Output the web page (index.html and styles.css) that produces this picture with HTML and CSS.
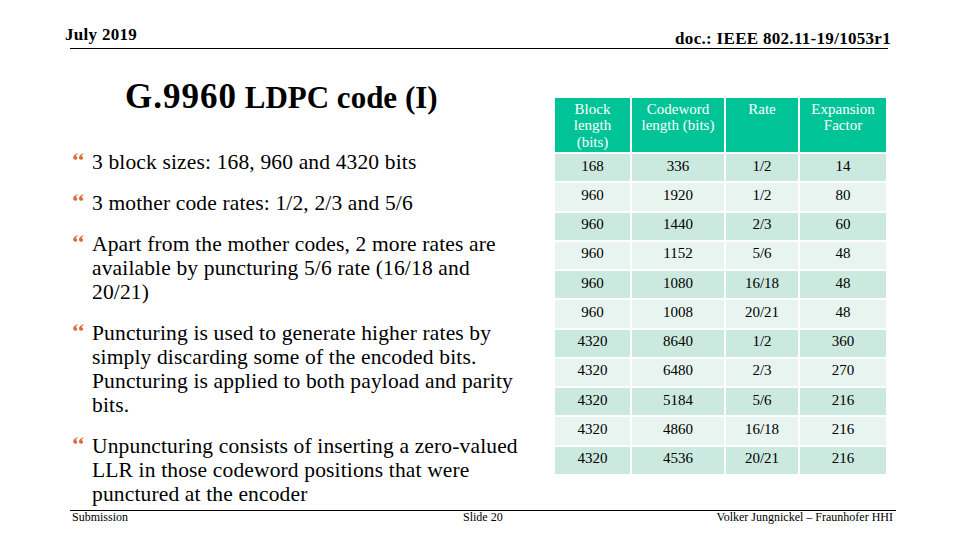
FILE: index.html
```html
<!DOCTYPE html>
<html lang="en">
<head>
<meta charset="utf-8">
<title>G.9960 LDPC code (I)</title>
<link rel="stylesheet" href="styles.css">
</head>
<body>
<div class="slide">
  <header class="top">
    <div class="top-row">
      <span class="date">July 2019</span>
      <span class="doc">doc.: IEEE 802.11-19/1053r1</span>
    </div>
    <div class="rule"></div>
  </header>
  <main class="content">
    <section class="left">
      <h1 class="title"><span class="big">G.9960</span> LDPC code (I)</h1>
      <ul class="bullets">
        <li><span class="mark"><svg viewBox="0 0 11 7" width="11" height="7"><path d="M4.6 0.3C2.2 0.9 0.2 2.6 0.2 4.6C0.2 6 1.1 6.8 2.3 6.8C3.5 6.8 4.3 6 4.3 4.9C4.3 3.9 3.6 3.3 2.7 3.2C3 2.1 3.9 1.3 4.9 0.9Z"/><path d="M10.4 0.3C8 0.9 6 2.6 6 4.6C6 6 6.9 6.8 8.1 6.8C9.3 6.8 10.1 6 10.1 4.9C10.1 3.9 9.4 3.3 8.5 3.2C8.8 2.1 9.7 1.3 10.7 0.9Z"/></svg></span><span class="txt">3 block sizes: 168, 960 and 4320 bits</span></li>
        <li><span class="mark"><svg viewBox="0 0 11 7" width="11" height="7"><path d="M4.6 0.3C2.2 0.9 0.2 2.6 0.2 4.6C0.2 6 1.1 6.8 2.3 6.8C3.5 6.8 4.3 6 4.3 4.9C4.3 3.9 3.6 3.3 2.7 3.2C3 2.1 3.9 1.3 4.9 0.9Z"/><path d="M10.4 0.3C8 0.9 6 2.6 6 4.6C6 6 6.9 6.8 8.1 6.8C9.3 6.8 10.1 6 10.1 4.9C10.1 3.9 9.4 3.3 8.5 3.2C8.8 2.1 9.7 1.3 10.7 0.9Z"/></svg></span><span class="txt">3 mother code rates: 1/2, 2/3 and 5/6</span></li>
        <li><span class="mark"><svg viewBox="0 0 11 7" width="11" height="7"><path d="M4.6 0.3C2.2 0.9 0.2 2.6 0.2 4.6C0.2 6 1.1 6.8 2.3 6.8C3.5 6.8 4.3 6 4.3 4.9C4.3 3.9 3.6 3.3 2.7 3.2C3 2.1 3.9 1.3 4.9 0.9Z"/><path d="M10.4 0.3C8 0.9 6 2.6 6 4.6C6 6 6.9 6.8 8.1 6.8C9.3 6.8 10.1 6 10.1 4.9C10.1 3.9 9.4 3.3 8.5 3.2C8.8 2.1 9.7 1.3 10.7 0.9Z"/></svg></span><span class="txt">Apart from the mother codes, 2 more rates are<br>available by puncturing 5/6 rate (16/18 and<br>20/21)</span></li>
        <li><span class="mark"><svg viewBox="0 0 11 7" width="11" height="7"><path d="M4.6 0.3C2.2 0.9 0.2 2.6 0.2 4.6C0.2 6 1.1 6.8 2.3 6.8C3.5 6.8 4.3 6 4.3 4.9C4.3 3.9 3.6 3.3 2.7 3.2C3 2.1 3.9 1.3 4.9 0.9Z"/><path d="M10.4 0.3C8 0.9 6 2.6 6 4.6C6 6 6.9 6.8 8.1 6.8C9.3 6.8 10.1 6 10.1 4.9C10.1 3.9 9.4 3.3 8.5 3.2C8.8 2.1 9.7 1.3 10.7 0.9Z"/></svg></span><span class="txt">Puncturing is used to generate higher rates by<br>simply discarding some of the encoded bits.<br>Puncturing is applied to both payload and parity<br>bits.</span></li>
        <li><span class="mark"><svg viewBox="0 0 11 7" width="11" height="7"><path d="M4.6 0.3C2.2 0.9 0.2 2.6 0.2 4.6C0.2 6 1.1 6.8 2.3 6.8C3.5 6.8 4.3 6 4.3 4.9C4.3 3.9 3.6 3.3 2.7 3.2C3 2.1 3.9 1.3 4.9 0.9Z"/><path d="M10.4 0.3C8 0.9 6 2.6 6 4.6C6 6 6.9 6.8 8.1 6.8C9.3 6.8 10.1 6 10.1 4.9C10.1 3.9 9.4 3.3 8.5 3.2C8.8 2.1 9.7 1.3 10.7 0.9Z"/></svg></span><span class="txt">Unpuncturing consists of inserting a zero-valued<br>LLR in those codeword positions that were<br>punctured at the encoder</span></li>
      </ul>
    </section>
    <section class="right">
      <table class="codes">
        <colgroup>
          <col class="c1"><col class="c2"><col class="c3"><col class="c4">
        </colgroup>
        <thead>
          <tr class="hrow"><th>Block length (bits)</th><th>Codeword length (bits)</th><th>Rate</th><th>Expansion Factor</th></tr>
        </thead>
        <tbody>
          <tr class="dark"><td>168</td><td>336</td><td>1/2</td><td>14</td></tr>
          <tr class="light"><td>960</td><td>1920</td><td>1/2</td><td>80</td></tr>
          <tr class="dark"><td>960</td><td>1440</td><td>2/3</td><td>60</td></tr>
          <tr class="light"><td>960</td><td>1152</td><td>5/6</td><td>48</td></tr>
          <tr class="dark"><td>960</td><td>1080</td><td>16/18</td><td>48</td></tr>
          <tr class="light"><td>960</td><td>1008</td><td>20/21</td><td>48</td></tr>
          <tr class="dark"><td>4320</td><td>8640</td><td>1/2</td><td>360</td></tr>
          <tr class="light"><td>4320</td><td>6480</td><td>2/3</td><td>270</td></tr>
          <tr class="dark"><td>4320</td><td>5184</td><td>5/6</td><td>216</td></tr>
          <tr class="light"><td>4320</td><td>4860</td><td>16/18</td><td>216</td></tr>
          <tr class="dark"><td>4320</td><td>4536</td><td>20/21</td><td>216</td></tr>
        </tbody>
      </table>
    </section>
  </main>
  <footer class="foot">
    <span class="sub">Submission</span>
    <span class="pg">Slide 20</span>
    <span class="auth">Volker Jungnickel &#8211; Fraunhofer HHI</span>
  </footer>
</div>
</body>
</html>
```

FILE: styles.css
```css
* { box-sizing: border-box; }

html, body {
  margin: 0;
  padding: 0;
}

body {
  width: 960px;
  height: 540px;
  background: #fff;
  color: #000;
  font-family: "Liberation Serif", "Times New Roman", serif;
  overflow: hidden;
}

.slide {
  width: 960px;
  height: 540px;
  display: flex;
  flex-direction: column;
}

.top { flex: none; }

.top-row {
  height: 48px;
  padding: 26px 69px 0 65px;
  display: flex;
  justify-content: space-between;
  align-items: flex-start;
  font-weight: bold;
  font-size: 17px;
  line-height: 18px;
  letter-spacing: 0.3px;
  white-space: nowrap;
}

.doc { margin-top: 4px; }

.rule {
  height: 1px;
  background: #000;
  margin: 0 72px 0 70px;
}

.content {
  flex: 1;
  min-height: 0;
  display: flex;
}

.left {
  flex: none;
  width: 553px;
  padding-top: 29px;
}

.title {
  margin: 0 0 0 125px;
  font-size: 31px;
  line-height: 37px;
  font-weight: bold;
  white-space: nowrap;
}

.title .big {
  font-size: 35px;
  letter-spacing: 1px;
}

.bullets {
  list-style: none;
  margin: 34px 0 0 73px;
  padding: 0;
  font-size: 21.5px;
  line-height: 24px;
  letter-spacing: 0.15px;
}

.bullets li {
  display: flex;
  margin-bottom: 17px;
}

.mark {
  flex: none;
  width: 19px;
  padding-top: 3px;
  fill: #d86b3a;
}

.mark svg { display: block; }

.txt { white-space: nowrap; }

.right {
  flex: 1;
  padding-top: 46.5px;
}

.codes {
  border-collapse: separate;
  border-spacing: 2px;
  table-layout: fixed;
  width: 335px;
  font-size: 15px;
  line-height: 16.5px;
}

.c1 { width: 75px; }
.c2 { width: 92px; }
.c3 { width: 72px; }
.c4 { width: 86px; }

.hrow { height: 54.5px; }

.codes th {
  background: #00c497;
  color: #fff;
  font-weight: normal;
  text-align: center;
  vertical-align: top;
  padding: 3.2px 5px 0;
}

.codes tbody tr { height: 27.25px; }

.codes td {
  text-align: center;
  vertical-align: top;
  padding: 3.5px 4px 0;
}

.dark td { background: #cce9df; }
.light td { background: #e7f4ef; }

.foot {
  flex: none;
  height: 30px;
  margin: 0 64px 0 70px;
  padding: 0 3px 0 2px;
  border-top: 1px solid #000;
  display: flex;
  font-size: 12px;
  line-height: 13px;
  white-space: nowrap;
}

.sub { width: 391px; }

.auth { margin-left: auto; }
```
